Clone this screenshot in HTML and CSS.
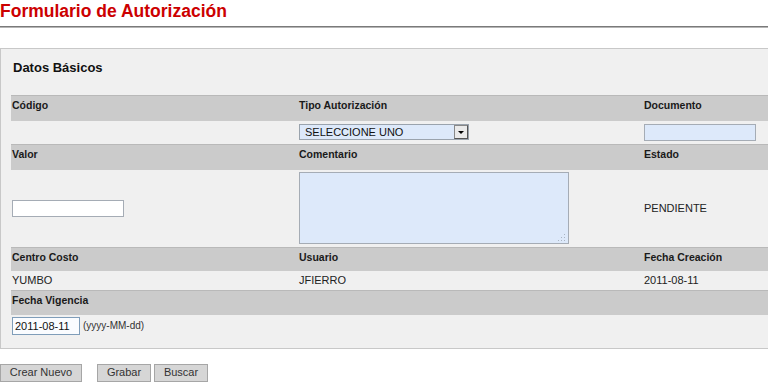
FILE: index.html
```html
<!DOCTYPE html>
<html lang="es">
<head>
<meta charset="utf-8">
<title>Formulario de Autorización</title>
<link rel="stylesheet" href="styles.css">
</head>
<body>
<h1 class="page-title">Formulario de Autorización</h1>
<div class="panel">
  <h2 class="section-title">Datos Básicos</h2>
  <table class="form-table">
    <colgroup><col class="c1"><col class="c2"><col class="c3"></colgroup>
    <tr class="hdr h25"><th>Código</th><th>Tipo Autorización</th><th>Documento</th></tr>
    <tr class="row r1">
      <td></td>
      <td><div class="select"><span class="select-text">SELECCIONE UNO</span><span class="select-btn"><span class="tri"></span></span></div></td>
      <td><div class="field doc"></div></td>
    </tr>
    <tr class="hdr h25"><th>Valor</th><th>Comentario</th><th>Estado</th></tr>
    <tr class="row r2">
      <td><div class="field valor"></div></td>
      <td><div class="textarea"><svg class="grip" width="9" height="9" viewBox="0 0 9 9"><g fill="#a9b4c2"><rect x="7" y="1" width="1" height="1"/><rect x="4" y="4" width="1" height="1"/><rect x="7" y="4" width="1" height="1"/><rect x="1" y="7" width="1" height="1"/><rect x="4" y="7" width="1" height="1"/><rect x="7" y="7" width="1" height="1"/></g></svg></div></td>
      <td>PENDIENTE</td>
    </tr>
    <tr class="hdr"><th>Centro Costo</th><th>Usuario</th><th>Fecha Creación</th></tr>
    <tr class="row r3"><td>YUMBO</td><td>JFIERRO</td><td>2011-08-11</td></tr>
    <tr class="hdr"><th>Fecha Vigencia</th><th></th><th></th></tr>
    <tr class="row r4">
      <td colspan="3"><div class="date-wrap"><span class="field date">2011-08-11</span><span class="hint">(yyyy-MM-dd)</span></div></td>
    </tr>
  </table>
</div>
<div class="actions">
  <button class="btn btn-new">Crear Nuevo</button>
  <button class="btn btn-sm">Grabar</button>
  <button class="btn btn-sm">Buscar</button>
</div>
</body>
</html>
```
FILE: styles.css
```css
html, body { margin: 0; padding: 0; overflow: hidden; background: #fff; }
body { font-family: "Liberation Sans", Arial, sans-serif; color: #222; font-size: 11px; width: 768px; }

.page-title {
  margin: 0;
  font-size: 17.5px;
  line-height: 22px;
  height: 22px;
  padding-bottom: 4px;
  color: #cc0000;
  font-weight: bold;
  border-bottom: 1px solid #7a7a7a;
  box-shadow: 0 1px 0 #b5b5b5;
}

.panel {
  margin-top: 21px;
  width: 800px;
  background: #f0f0f0;
  border: 1px solid #c8c8c8;
  padding: 11px 0 8px 10px;
}

.section-title {
  margin: 0 0 19px 2px;
  font-size: 13px;
  line-height: 16px;
  font-weight: bold;
  color: #111;
}

.form-table {
  border-collapse: collapse;
  table-layout: fixed;
  width: 790px;
}
.c1 { width: 287px; }
.c2 { width: 345px; }
.c3 { width: 158px; }

.hdr th {
  background: #cbcbcb;
  border-top: 1px solid #b9b9b9;
  text-align: left;
  font-size: 10.5px;
  font-weight: bold;
  color: #1a1a1a;
  line-height: 13px;
  height: 24px;
  padding: 3px 1px 0;
  vertical-align: top;
  box-sizing: border-box;
}
.hdr.h25 th { height: 25px; }

.row td {
  padding: 0 1px;
  vertical-align: middle;
  font-size: 11px;
  line-height: 13px;
  color: #222;
}
.r1 td { height: 24px; vertical-align: top; padding-top: 3px; box-sizing: border-box; }
.r2 td { height: 77px; }
.r3 td { height: 19px; }
.r4 td { height: 25px; vertical-align: top; padding-top: 2px; box-sizing: border-box; }

.select {
  display: flex;
  width: 170px;
  height: 16px;
  box-sizing: border-box;
  border: 1px solid #9aa3ad;
  background: #dde9fa;
}
.select-text {
  flex: 1;
  padding-left: 5px;
  font-size: 11px;
  line-height: 14px;
  color: #111;
}
.select-btn {
  width: 14px;
  height: 14px;
  box-sizing: border-box;
  border: 1px solid #555;
  border-top-color: #888;
  border-left-color: #888;
  background: #eaeaea;
  display: flex;
  align-items: center;
  justify-content: center;
}
.tri {
  width: 0; height: 0;
  border-left: 3px solid transparent;
  border-right: 3px solid transparent;
  border-top: 3px solid #000;
  margin-top: 1px;
}

.field {
  display: block;
  box-sizing: border-box;
  border: 1px solid #a5acb5;
}
.doc { width: 112px; height: 17px; background: #dde9fa; }
.valor { width: 112px; height: 17px; background: #fff; }

.textarea {
  position: relative;
  width: 270px;
  height: 72px;
  box-sizing: border-box;
  border: 1px solid #a5acb5;
  background: #dde9fa;
}
.grip { position: absolute; right: 2px; bottom: 1px; }

.date-wrap { display: flex; align-items: center; gap: 3px; }
.date {
  display: inline-block;
  width: 68px;
  height: 18px;
  line-height: 16px;
  padding-left: 2px;
  border: 1px solid #7f9db9;
  background: #fafcff;
  font-size: 11px;
  color: #111;
}
.hint { font-size: 10px; color: #333; }

.actions {
  margin-top: 15px;
  display: flex;
  gap: 3px;
}
.btn {
  font-family: "Liberation Sans", Arial, sans-serif;
  font-size: 11px;
  color: #333;
  height: 18px;
  line-height: 15px;
  padding: 0;
  border: 1px solid #a6a6a6;
  background: #d6d6d6;
  margin: 0;
  border-radius: 0;
  white-space: nowrap;
  text-align: center;
}
.btn-new { margin-right: 12px; width: 82px; }
.btn-sm { width: 54px; }
```
